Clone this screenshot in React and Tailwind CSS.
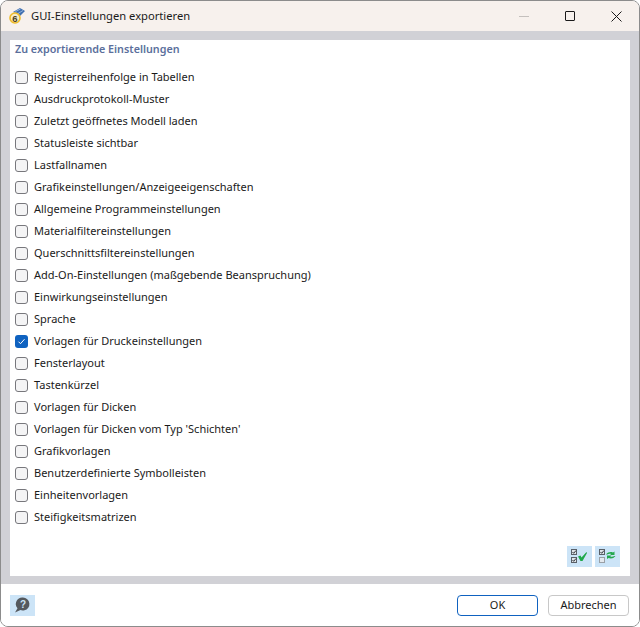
import React from 'react';

const items = [
  'Registerreihenfolge in Tabellen',
  'Ausdruckprotokoll-Muster',
  'Zuletzt geöffnetes Modell laden',
  'Statusleiste sichtbar',
  'Lastfallnamen',
  'Grafikeinstellungen/Anzeigeeigenschaften',
  'Allgemeine Programmeinstellungen',
  'Materialfiltereinstellungen',
  'Querschnittsfiltereinstellungen',
  'Add-On-Einstellungen (maßgebende Beanspruchung)',
  'Einwirkungseinstellungen',
  'Sprache',
  'Vorlagen für Druckeinstellungen',
  'Fensterlayout',
  'Tastenkürzel',
  'Vorlagen für Dicken',
  "Vorlagen für Dicken vom Typ 'Schichten'",
  'Grafikvorlagen',
  'Benutzerdefinierte Symbolleisten',
  'Einheitenvorlagen',
  'Steifigkeitsmatrizen',
];

const MiniBox = ({ y, checked }) => (
  <g>
    <rect x="1.500" y={y + 0.5} width="5" height="5" fill={checked ? '#dfe3e8' : '#e4e9ee'} stroke={checked ? '#5a6068' : '#9aa0a6'} />
    {checked && <path d={`M2.500 ${y + 3}l1.200 1.300 2.300-2.800`} fill="none" stroke="#30343a" strokeWidth="1" />}
  </g>
);

const AllIcon = () => (
  <svg width="25" height="21" viewBox="0 0 25 21">
    <rect width="25" height="21" fill="#cce4f7" />
    <g transform="translate(3 3)">
      <MiniBox y={0} checked />
      <MiniBox y={8} checked />
    </g>
    <path d="M11 10.500l2.500-1 1 2 5-5.500.5 1-4.500 8h-2z" fill="#1fa84a" />
  </svg>
);

const InvertIcon = () => (
  <svg width="25" height="21" viewBox="0 0 25 21">
    <rect width="25" height="21" fill="#cce4f7" />
    <g transform="translate(3 3)">
      <MiniBox y={0} checked />
      <MiniBox y={8} />
    </g>
    <path d="M11 8.500c2-2.500 4.500-3 7-2l1.500-1v3.500h-4.500l1.200-1c-1.500-.5-3 0-4 .5z" fill="#26a84f" />
    <path d="M20.500 10c-2 2.500-4.500 3-7 2l-1.500 1v-3.500h4.500l-1.200 1c1.500.5 3 0 4-.5z" fill="#26a84f" />
  </svg>
);

const HelpIcon = () => (
  <svg width="25" height="21" viewBox="0 0 25 21">
    <rect width="25" height="21" fill="#cce4f7" />
    <path d="M13 2.500a6.500 6.500 0 0 1 1.500 12.800c-1.800.4-3.200.2-4-.3L5 17.500l2.500-4.200A6.500 6.500 0 0 1 13 2.500z" fill="#55595e" />
    <text x="13" y="13" textAnchor="middle" fontSize="10" fontWeight="700" fill="#cce4f7" fontFamily="Liberation Sans, sans-serif">?</text>
  </svg>
);

const AppIcon = () => (
  <svg width="18" height="18" viewBox="0 0 18 18">
    <path d="M5 5l7-4 5 3-5 5z" fill="#3f6fb0" />
    <path d="M7.500 4.500l5-2.500M10 6.500l5-3" stroke="#a8c4e6" strokeWidth="0.8" />
    <circle cx="7" cy="11" r="5.500" fill="#f6ecc8" />
    <circle cx="7" cy="11" r="5" fill="none" stroke="#eebb2a" strokeWidth="1.600" />
    <text x="7" y="14.500" textAnchor="middle" fontSize="9.500" fontWeight="700" fill="#4a3f20" fontFamily="Liberation Sans, sans-serif">6</text>
  </svg>
);

const CheckRow = ({ label, checked }) => (
  <div className="flex h-[22px] items-center">
    {checked ? (
      <span className="flex h-[13px] w-[13px] items-center justify-center rounded-[3px] bg-[#0f62c0]">
        <svg width="9" height="9" viewBox="0 0 9 9">
          <path d="M1.500 4.700l2 2 4-4.500" fill="none" stroke="#ffffff" strokeWidth="1" />
        </svg>
      </span>
    ) : (
      <span className="h-[13px] w-[13px] rounded-[3px] border border-[#77777c] bg-[#f4f4f5]" />
    )}
    <span className="ml-[6px] text-[11px] text-[#1a1a1a]">{label}</span>
  </div>
);

export default function App() {
  return (
    <div className="flex h-[627px] w-[640px] flex-col overflow-hidden rounded-lg border border-[#8c8c8c] bg-white font-['Noto_Sans',sans-serif]">
      {/* Title bar */}
      <div className="flex h-[30px] shrink-0 items-center bg-[#f7f1ed]">
        <div className="ml-[7px]"><AppIcon /></div>
        <span className="ml-[5px] text-[11.2px] text-[#1a1a1a]">GUI-Einstellungen exportieren</span>
        <div className="ml-auto flex items-center">
          <div className="flex h-[30px] w-[46px] items-center justify-center">
            <span className="h-px w-[10px] bg-[#c4c0bd]" />
          </div>
          <div className="flex h-[30px] w-[46px] items-center justify-center">
            <span className="h-[10px] w-[10px] rounded-[1px] border border-[#1a1a1a]" />
          </div>
          <div className="flex h-[30px] w-[46px] items-center justify-center">
            <svg width="11" height="11" viewBox="0 0 11 11">
              <path d="M.5.500l10 10M10.500.500l-10 10" stroke="#1a1a1a" strokeWidth="1" />
            </svg>
          </div>
        </div>
      </div>

      {/* Content */}
      <div className="flex min-h-0 flex-1 flex-col bg-[#d1d1d6] pt-[9px] pb-[8px] pl-[9px] pr-[9px]">
        <div className="flex flex-1 flex-col bg-white pl-[5px] pr-[10px]">
          <div className="mt-[1px] text-[10.75px] font-semibold text-[#5b6f9c]">Zu exportierende Einstellungen</div>
          <div className="mt-[9px]">
            {items.map((label) => (
              <CheckRow key={label} label={label} checked={label === 'Vorlagen für Druckeinstellungen'} />
            ))}
          </div>
          <div className="mt-auto mb-[9px] flex justify-end gap-[3px]">
            <AllIcon />
            <InvertIcon />
          </div>
        </div>
      </div>

      {/* Footer */}
      <div className="flex h-[42px] shrink-0 items-center bg-white pl-[9px] pr-[10px]">
        <HelpIcon />
        <button className="ml-auto h-[21px] w-[81px] rounded-[4px] border border-[#0f62c0] bg-white text-[11px] text-[#1a1a1a]">OK</button>
        <button className="ml-[10px] h-[21px] w-[81px] rounded-[4px] border border-[#c8c8c8] bg-white text-[11px] text-[#1a1a1a]">Abbrechen</button>
      </div>
    </div>
  );
}
